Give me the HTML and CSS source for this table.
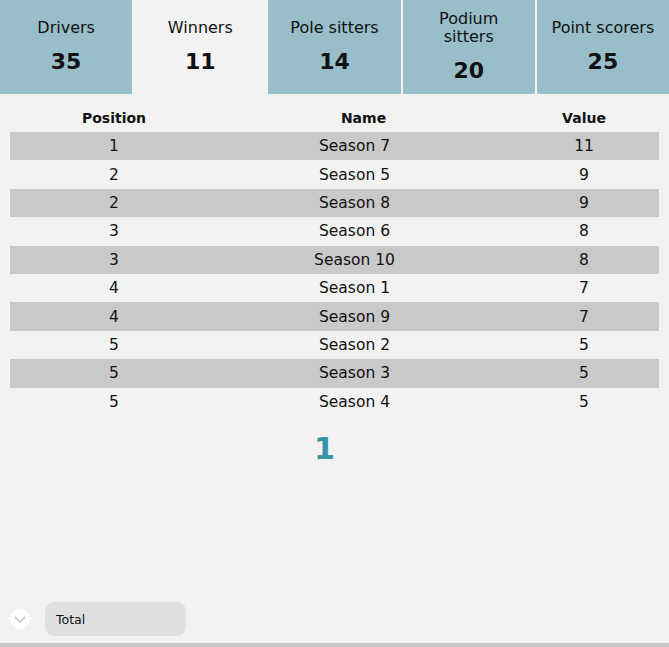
FILE: index.html
```html
<!DOCTYPE html>
<html>
<head>
<meta charset="utf-8">
<link rel="stylesheet" href="styles.css">
</head>
<body>
<div class="page">
  <nav class="tabs">
    <div class="tab"><div class="tab-label">Drivers</div><div class="tab-value">35</div></div>
    <div class="tab active"><div class="tab-label">Winners</div><div class="tab-value">11</div></div>
    <div class="tab"><div class="tab-label">Pole sitters</div><div class="tab-value">14</div></div>
    <div class="tab"><div class="tab-label">Podium<br>sitters</div><div class="tab-value">20</div></div>
    <div class="tab"><div class="tab-label">Point scorers</div><div class="tab-value">25</div></div>
  </nav>
  <table class="grid">
    <thead>
      <tr><th class="c-pos">Position</th><th class="c-name">Name</th><th class="c-val">Value</th></tr>
    </thead>
    <tbody>
      <tr><td>1</td><td class="name-cell">Season 7</td><td>11</td></tr>
      <tr><td>2</td><td class="name-cell">Season 5</td><td>9</td></tr>
      <tr><td>2</td><td class="name-cell">Season 8</td><td>9</td></tr>
      <tr><td>3</td><td class="name-cell">Season 6</td><td>8</td></tr>
      <tr><td>3</td><td class="name-cell">Season 10</td><td>8</td></tr>
      <tr><td>4</td><td class="name-cell">Season 1</td><td>7</td></tr>
      <tr><td>4</td><td class="name-cell">Season 9</td><td>7</td></tr>
      <tr><td>5</td><td class="name-cell">Season 2</td><td>5</td></tr>
      <tr><td>5</td><td class="name-cell">Season 3</td><td>5</td></tr>
      <tr><td>5</td><td class="name-cell">Season 4</td><td>5</td></tr>
    </tbody>
  </table>
  <div class="pager"><span class="page-num">1</span></div>
  <footer class="footer">
    <span class="toggle">
      <svg width="20" height="20" viewBox="0 0 20 20"><circle cx="10" cy="10" r="10" fill="#ffffff"/><path d="M5 8 L10 13 L15 8" fill="none" stroke="#cfcfcf" stroke-width="1.8"/></svg>
    </span>
    <div class="total">Total</div>
  </footer>
</div>
</body>
</html>
```
FILE: styles.css
```css
html, body {
  margin: 0;
  padding: 0;
  background: #f2f2f2;
}
body {
  font-family: "DejaVu Sans", "Noto Sans", sans-serif;
  color: #111;
}
.page {
  display: flex;
  flex-direction: column;
  height: 647px;
  box-sizing: border-box;
  border-bottom: 4px solid #c8c8c8;
}
.tabs {
  display: flex;
  gap: 2px;
  height: 94px;
}
.tab {
  flex: 1;
  background: #97bec9;
  display: flex;
  flex-direction: column;
  align-items: center;
  justify-content: center;
  text-align: center;
}
.tab.active {
  background: #f2f2f2;
}
.tab-label {
  font-size: 16px;
  line-height: 18px;
  margin-top: 2px;
}
.tab-value {
  font-size: 22px;
  font-weight: bold;
  line-height: 30px;
  margin-top: 10px;
}
.grid {
  margin: 9px 10px 0 10px;
  width: 649px;
  border-collapse: collapse;
  font-size: 15.5px;
  table-layout: fixed;
}
.grid th {
  font-weight: bold;
  font-size: 14px;
  height: 29px;
  padding: 0;
  text-align: center;
}
.c-pos { width: 208px; }
.c-name { width: 291px; }
.c-val { width: 150px; }
.grid td {
  height: 28.4px;
  padding: 0;
  text-align: center;
}
.grid td.name-cell {
  padding-right: 18px;
}
.grid tbody tr:nth-child(odd) {
  background: #c9c9c9;
}
.pager {
  text-align: center;
  margin-top: 16px;
  padding-right: 20px;
}
.page-num {
  font-size: 30px;
  font-weight: bold;
  color: #3a93a5;
  line-height: 34px;
}
.footer {
  margin-top: auto;
  display: flex;
  align-items: center;
  gap: 15px;
  padding: 0 0 7px 10px;
}
.toggle {
  display: flex;
  width: 20px;
  height: 20px;
}
.total {
  width: 141px;
  height: 34px;
  box-sizing: border-box;
  padding-left: 11px;
  background: #e0e0e0;
  border-radius: 9px;
  font-size: 12.5px;
  display: flex;
  align-items: center;
}
```
